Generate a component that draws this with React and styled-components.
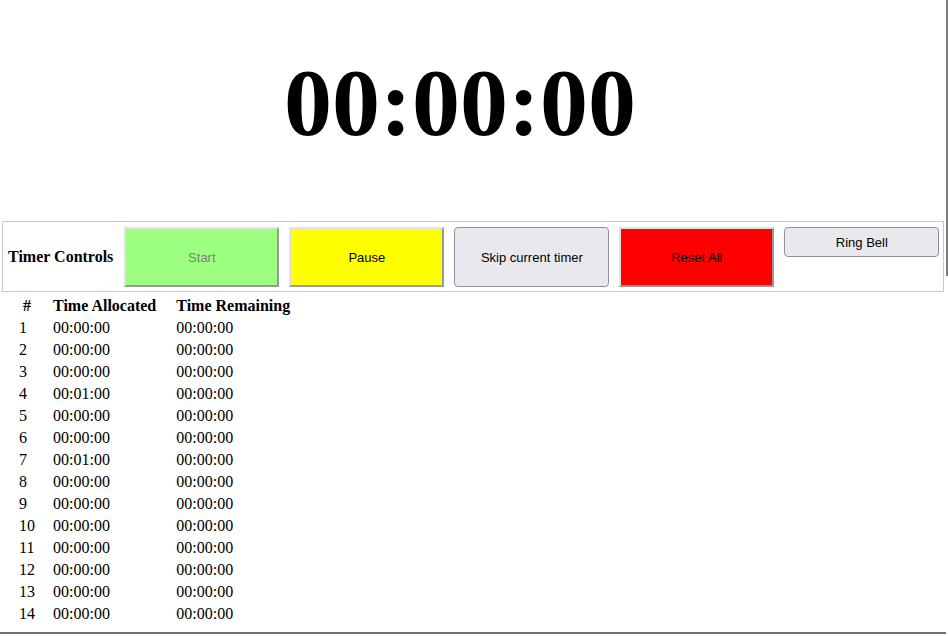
import React from "react";
import styled, { createGlobalStyle } from "styled-components";

const GlobalStyle = createGlobalStyle`
  html, body { margin: 0; padding: 0; background: #fff; }
  body { font-family: "Liberation Serif", "Times New Roman", serif; color: #000; }
`

const Frame = styled.div`
  position: relative;
  width: 946px;
  height: 632px;
  border-bottom: 2px solid #707070;
  &::after {
    content: "";
    position: absolute;
    top: 0; right: -2px;
    width: 2px;
    height: 276px;
    background: #808080;
  }
`

const Clock = styled.div`
  height: 221px;
  box-sizing: border-box;
  padding: 55px 26px 0 0;
  text-align: center;
  font-size: 96px;
  line-height: 96px;
  font-weight: bold;
`

const Controls = styled.div`
  margin-left: 2px;
  width: 942px;
  box-sizing: border-box;
  border: 1px solid #ccc6c6;
  padding: 5px 5px 4px 5px;
  display: flex;
  align-items: center;
  gap: 10px;
`

const Label = styled.span`
  font-weight: bold;
  font-size: 16px;
  white-space: nowrap;
  flex-shrink: 0;
  margin-right: 1px;
`

const ColorButton = styled.button`
  flex-shrink: 0;
  width: 155px;
  height: 60px;
  background: ${p => p.$bg};
  color: ${p => p.disabled ? "#808080" : "#000"};
  border: 2px solid;
  border-color: #e3e3e3 #999 #999 #e3e3e3;
  border-radius: 0;
  font-family: "Liberation Sans", Tahoma, sans-serif;
  font-size: 13px;
  padding: 0;
`

const PlainButton = styled.button`
  flex-shrink: 0;
  width: 155px;
  height: ${p => p.$tall ? "60px" : "30px"};
  align-self: ${p => p.$tall ? "center" : "flex-start"};
  background: #e9e9ed;
  color: #000;
  border: 1px solid #8f8f9d;
  border-radius: 4px;
  font-family: "Liberation Sans", Tahoma, sans-serif;
  font-size: 13px;
  padding: 0;
`

const Table = styled.table`
  margin: 3px 0 0 19px;
  border-collapse: collapse;
  font-size: 16px;
`

const Th = styled.th`
  padding: 0 ${p => p.$pad}px 0 0;
  height: 22px;
  line-height: 22px;
  font-weight: bold;
  text-align: center;
  white-space: nowrap;
`

const Td = styled.td`
  padding: 0 ${p => p.$pad}px 0 0;
  height: 22px;
  line-height: 22px;
  text-align: left;
  white-space: nowrap;
`

const timers = [
  "00:00:00", "00:00:00", "00:00:00", "00:01:00", "00:00:00", "00:00:00", "00:01:00",
  "00:00:00", "00:00:00", "00:00:00", "00:00:00", "00:00:00", "00:00:00", "00:00:00",
];

export default function App() {
  return (
    <>
      <GlobalStyle />
      <Frame>
        <Clock>00:00:00</Clock>
        <Controls>
          <Label>Timer Controls</Label>
          <ColorButton $bg="#9cff80" disabled>Start</ColorButton>
          <ColorButton $bg="#ffff00">Pause</ColorButton>
          <PlainButton $tall>Skip current timer</PlainButton>
          <ColorButton $bg="#ff0000">Reset All</ColorButton>
          <PlainButton>Ring Bell</PlainButton>
        </Controls>
        <Table>
          <thead>
            <tr>
              <Th $pad={18}>#</Th>
              <Th $pad={20}>Time Allocated</Th>
              <Th $pad={0}>Time Remaining</Th>
            </tr>
          </thead>
          <tbody>
            {timers.map((t, i) => (
              <tr key={i}>
                <Td $pad={18}>{i + 1}</Td>
                <Td $pad={20}>{t}</Td>
                <Td $pad={0}>00:00:00</Td>
              </tr>
            ))}
          </tbody>
        </Table>
      </Frame>
    </>
  );
}
